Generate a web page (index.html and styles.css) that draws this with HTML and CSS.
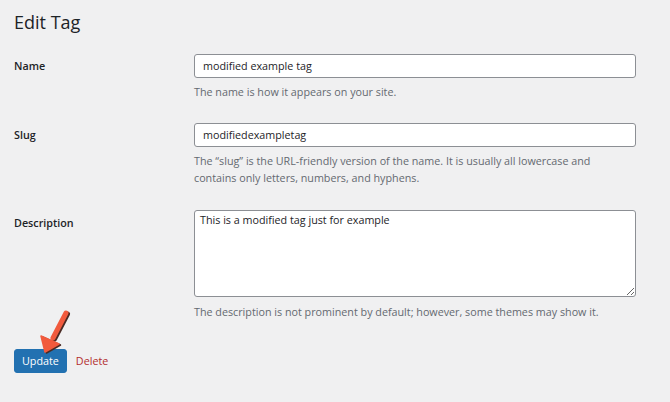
FILE: index.html
```html
<!DOCTYPE html>
<html lang="en">
<head>
  <meta charset="UTF-8">
  <meta name="viewport" content="width=device-width, initial-scale=1.0">
  <title>Edit Tag</title>
  <link rel="stylesheet" href="styles.css">
</head>
<body>
  <div class="wrap">
    <h1>Edit Tag</h1>

    <form class="edit-form">
      <div class="form-row row-name">
        <label for="tag-name">Name</label>
        <div class="field">
          <input type="text" id="tag-name" value="modified example tag">
          <p class="help">The name is how it appears on your site.</p>
        </div>
      </div>

      <div class="form-row row-slug">
        <label for="tag-slug">Slug</label>
        <div class="field">
          <input type="text" id="tag-slug" value="modifiedexampletag">
          <p class="help">The “slug” is the URL-friendly version of the name. It is usually all lowercase and contains only letters, numbers, and hyphens.</p>
        </div>
      </div>

      <div class="form-row row-desc">
        <label for="tag-desc">Description</label>
        <div class="field">
          <textarea id="tag-desc" rows="5">This is a modified tag just for example</textarea>
          <p class="help">The description is not prominent by default; however, some themes may show it.</p>
        </div>
      </div>

      <div class="actions">
        <button type="button" class="button-primary">Update</button>
        <a href="#" class="delete">Delete</a>
        <!-- annotation arrow pointing at the button -->
        <svg class="arrow" width="50" height="50" viewBox="0 0 50 50">
          <g transform="translate(1.5 1)">
            <path d="M32 4 L19 29" stroke="#4a2a24" stroke-width="5" stroke-linecap="round" fill="none"/>
            <path d="M7 27 L11 43 L25 35 Z" fill="#4a2a24" stroke="#4a2a24" stroke-width="1.5" stroke-linejoin="round"/>
          </g>
          <path d="M32 4 L19 29" stroke="#f15a3d" stroke-width="5" stroke-linecap="round" fill="none"/>
          <path d="M7 27 L11 43 L25 35 Z" fill="#f15a3d" stroke="#f15a3d" stroke-width="1.5" stroke-linejoin="round"/>
        </svg>
      </div>
    </form>
  </div>
</body>
</html>
```

FILE: styles.css
```css
body {
  margin: 0;
  background: #f0f0f1;
  color: #1d2327;
  font-family: "Open Sans", "Noto Sans", sans-serif;
  font-size: 10.75px;
}

.wrap {
  padding: 8px 34px 0 14px;
}

h1 {
  font-size: 18px;
  font-weight: 400;
  margin: 0;
  line-height: 28px;
}

.form-row {
  display: grid;
  grid-template-columns: 180px 1fr;
}

.form-row label {
  font-weight: 600;
  line-height: 24px;
}

.row-name {
  margin-top: 18px;
}

.row-slug {
  margin-top: 22px;
}

.row-desc {
  margin-top: 23px;
}

.row-desc label {
  line-height: 26px;
}

.field input,
.field textarea {
  display: block;
  box-sizing: border-box;
  width: 100%;
  margin: 0;
  font-family: inherit;
  font-size: 10.75px;
  color: #1d2327;
  background: #fff;
  border: 1px solid #8c8f94;
  border-radius: 3px;
}

.field input {
  height: 24px;
  padding: 0 8px;
}

.field textarea {
  height: 87px;
  padding: 2px 5px;
  resize: vertical;
}

.help {
  max-width: 415px;
  margin: 6px 0 0;
  color: #646970;
  line-height: 17px;
}

.row-desc .help {
  margin-top: 7px;
}

.actions {
  position: relative;
  display: flex;
  align-items: center;
  gap: 9px;
  margin-top: 28px;
}

.button-primary {
  height: 24px;
  padding: 0 7px;
  background: #2271b1;
  border: 1px solid #2271b1;
  border-radius: 3px;
  color: #fff;
  font-family: inherit;
  font-size: 10.75px;
}

.delete {
  color: #b32d2e;
  text-decoration: none;
}

.arrow {
  position: absolute;
  left: 20px;
  top: -40px;
}
```
